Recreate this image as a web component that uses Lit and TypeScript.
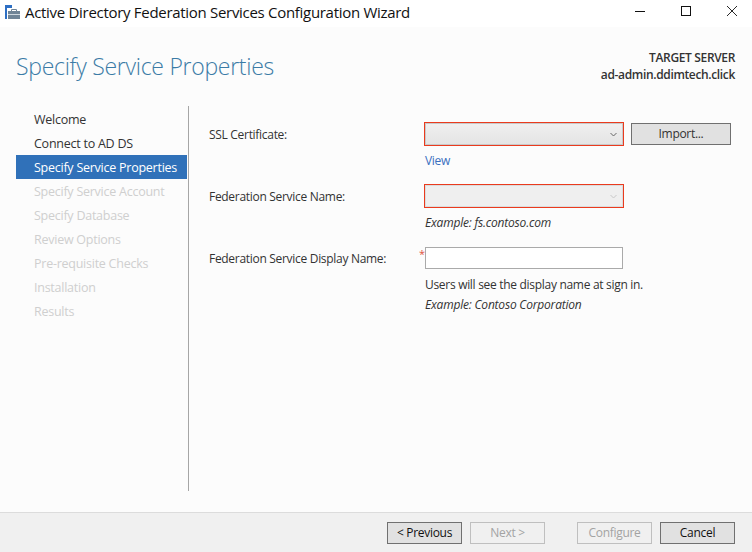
import { LitElement, html, css } from "lit";
import { customElement } from "lit/decorators.js";

const steps = [
  { label: "Welcome", state: "done" },
  { label: "Connect to AD DS", state: "done" },
  { label: "Specify Service Properties", state: "active" },
  { label: "Specify Service Account", state: "off" },
  { label: "Specify Database", state: "off" },
  { label: "Review Options", state: "off" },
  { label: "Pre-requisite Checks", state: "off" },
  { label: "Installation", state: "off" },
  { label: "Results", state: "off" },
];

const chevron = html`<svg width="7" height="5" viewBox="0 0 7 5"><path d="M.5 1l3 3 3-3" fill="none" stroke="currentColor" stroke-width="1"/></svg>`;

@customElement("app-root")
export class AppRoot extends LitElement {
  static styles = css`
    :host {
      display: flex;
      flex-direction: column;
      width: 752px;
      height: 552px;
      overflow: hidden;
      background: #fcfcfc;
      color: #333;
      font-family: "Open Sans", "Noto Sans", sans-serif;
      font-size: 12px;
      letter-spacing: -0.3px;
    }
    .titlebar {
      box-sizing: border-box;
      height: 27px;
      background: #fff;
      display: flex;
      align-items: center;
      padding: 0 0 3px 5px;
      color: #111;
      font-size: 15px;
      letter-spacing: -0.3px;
      flex: none;
    }
    .titlebar .app-icon { margin-right: 5px; flex: none; }
    .titlebar .name { flex: 1; white-space: nowrap; }
    .win { display: flex; align-items: center; margin-right: -3px; align-self: flex-start; }
    .win button {
      width: 46px;
      height: 22px;
      padding: 0;
      border: none;
      background: none;
      display: flex;
      align-items: center;
      justify-content: center;
    }
    .head {
      height: 79px;
      flex: none;
      display: flex;
      justify-content: space-between;
      padding: 0 17px 0 16px;
    }
    h1 {
      margin: 23px 0 0;
      font-size: 23px;
      line-height: 33px;
      font-weight: 300;
      letter-spacing: -0.28px;
      color: #3b7ba6;
    }
    .server {
      margin-top: 22px;
      text-align: right;
      line-height: 17px;
      font-weight: 600;
      letter-spacing: -0.35px;
      color: #333;
    }
    .main { flex: 1; display: flex; min-height: 0; padding-bottom: 21px; }
    nav {
      width: 172px;
      margin-left: 16px;
      flex: none;
      border-right: 1px solid #a6a6a6;
      height: 385px;
      font-size: 12.5px;
      letter-spacing: -0.25px;
    }
    .step {
      box-sizing: border-box;
      height: 24px;
      line-height: 24px;
      padding: 1px 0 0 18px;
      margin-right: 1px;
      white-space: nowrap;
    }
    .step:first-child { margin-top: 1px; }
    .step.active { background: #3071b9; color: #fff; }
    .step.off { color: #cfcfcf; }
    .form {
      flex: 1;
      padding: 16px 0 0 20px;
      display: grid;
      grid-template-columns: 208px 200px 100px;
      column-gap: 7px;
      grid-auto-rows: min-content;
      align-content: start;
      justify-items: start;
    }
    .label { line-height: 24px; padding-top: 1px; white-space: nowrap; }
    .combo {
      box-sizing: border-box;
      width: 200px;
      height: 24px;
      border: 1px solid #ea3b1e;
      box-shadow: inset 0 0 0 1px #c9c9c9;
      background: linear-gradient(#f0f0f0, #e4e4e4);
      display: flex;
      align-items: center;
      justify-content: flex-end;
      padding-right: 6px;
      color: #666;
    }
    .combo.disabled { background: #efefef; color: #c8c8c8; box-shadow: inset 0 0 0 1px #dcdcdc; }
    .import { margin-top: 1px; width: 100px; }
    .btn {
      box-sizing: border-box;
      height: 22px;
      border: 1px solid #707070;
      background: #e1e1e1;
      color: #333;
      font: inherit;
      letter-spacing: inherit;
      padding: 0;
      text-align: center;
      line-height: 20px;
    }
    .btn[disabled] { border-color: #bfbfbf; background: #f0f0f0; color: #a3a3a3; }
    .sub { grid-column: 2 / 4; line-height: 17px; white-space: nowrap; padding-left: 1px; }
    .link { color: #3a6fc0; margin: 5px 0 15px; }
    .example { font-style: italic; letter-spacing: -0.2px; }
    .after-combo { margin: 5px 0 15px; }
    .field { position: relative; width: 200px; height: 24px; display: flex; justify-content: center; }
    .field input {
      box-sizing: border-box;
      width: 198px;
      height: 22px;
      margin: 1px 0 0;
      padding: 0;
      border: 1px solid #aaa;
      background: #fff;
    }
    .req { position: absolute; left: -5px; top: 0; color: #e0533f; font-size: 11px; line-height: 16px; }
    .hint { margin-top: 5px; }
    .hint2 { margin-top: 3px; }
    footer {
      height: 39px;
      flex: none;
      background: #f0f0f0;
      border-top: 1px solid #dcdcdc;
      display: flex;
      justify-content: flex-end;
      align-items: center;
      padding-right: 17px;
      gap: 8px;
    }
    footer .btn { width: 75px; }
    footer .gap { margin-right: 24px; }
    footer .dark { color: #111; }
  `;

  render() {
    return html`
      <div class="titlebar">
        <svg class="app-icon" width="15" height="14" viewBox="0 0 15 14">
          <rect x="0" y="0" width="7" height="3" fill="#2d6fc4"/>
          <rect x="0" y="3" width="2" height="11" fill="#2d6fc4"/>
          <rect x="3" y="6" width="12" height="8" fill="#6f8496"/>
          <rect x="3" y="9" width="12" height="1" fill="#cfd8df"/>
          <path d="M6.500 6V4.500h5V6" fill="none" stroke="#6f8496"/>
        </svg>
        <span class="name">Active Directory Federation Services Configuration Wizard</span>
        <div class="win">
          <button aria-label="Minimize"><svg width="10" height="10" viewBox="0 0 10 10"><path d="M0 5.500h10" stroke="#111"/></svg></button>
          <button aria-label="Maximize"><svg width="10" height="10" viewBox="0 0 10 10"><rect x=".5" y=".5" width="9" height="9" fill="none" stroke="#111"/></svg></button>
          <button aria-label="Close"><svg width="10" height="10" viewBox="0 0 10 10"><path d="M0 0l10 10M10 0L0 10" stroke="#111" stroke-width=".9"/></svg></button>
        </div>
      </div>
      <div class="head">
        <h1>Specify Service Properties</h1>
        <div class="server">TARGET SERVER<br />ad-admin.ddimtech.click</div>
      </div>
      <div class="main">
        <nav>
          ${steps.map((s) => html`<div class="step ${s.state}">${s.label}</div>`)}
        </nav>
        <div class="form">
          <div class="label">SSL Certificate:</div>
          <div class="combo">${chevron}</div>
          <button class="btn import">Import...</button>
          <div class="sub link">View</div>

          <div class="label">Federation Service Name:</div>
          <div class="combo disabled">${chevron}</div>
          <div></div>
          <div class="sub example after-combo">Example: fs.contoso.com</div>

          <div class="label">Federation Service Display Name:</div>
          <div class="field"><span class="req">*</span><input type="text" /></div>
          <div></div>
          <div class="sub hint">Users will see the display name at sign in.</div>
          <div class="sub example hint2">Example: Contoso Corporation</div>
        </div>
      </div>
      <footer>
        <button class="btn dark">&lt; Previous</button>
        <button class="btn gap" disabled>Next &gt;</button>
        <button class="btn" disabled>Configure</button>
        <button class="btn dark">Cancel</button>
      </footer>
    `;
  }
}
